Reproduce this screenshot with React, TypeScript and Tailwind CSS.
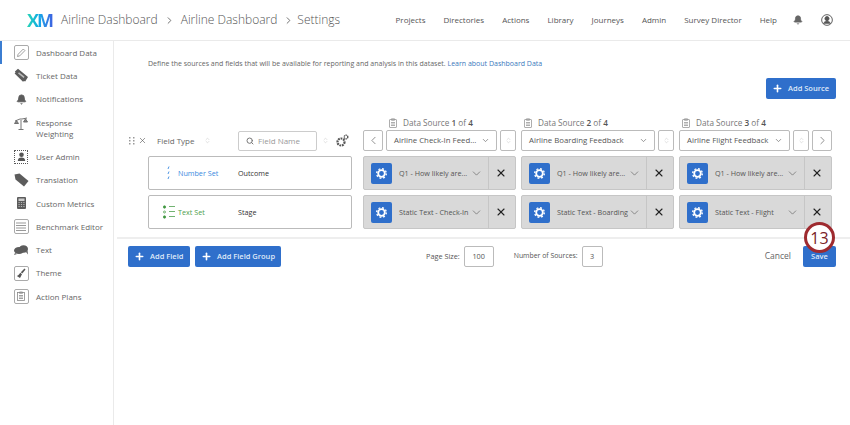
import { Bell, ChevronDown, ChevronLeft, ChevronRight, ChevronsUpDown, Plus, Search, X } from 'lucide-react'
import type { ReactNode } from 'react'

const font = { fontFamily: '"Open Sans", sans-serif' }

function Box({ children }: { children: ReactNode }) {
  return (
    <div className="w-[15px] h-[15px] border border-[#aaa] rounded-[2px] flex items-center justify-center">
      {children}
    </div>
  )
}

function Lines() {
  return (
    <svg width="10" height="9" viewBox="0 0 10 9" stroke="#999" strokeWidth="1">
      <path d="M0 1h10M0 3.5h10M0 6h10M0 8.5h10" />
    </svg>
  )
}

const sideItems: { label: ReactNode; icon: ReactNode; tall?: boolean; active?: boolean }[] = [
  {
    label: 'Dashboard Data',
    active: true,
    icon: (
      <Box>
        <svg width="10" height="10" viewBox="0 0 10 10" fill="none" stroke="#888" strokeWidth="0.8">
          <path d="M1.5 8.5l.6-2.2L7.3 1l1.6 1.6-5.2 5.3z" />
        </svg>
      </Box>
    ),
  },
  {
    label: 'Ticket Data',
    icon: (
      <svg width="15" height="15" viewBox="0 0 15 15" fill="#5c5c5c">
        <path d="M4 .8l10 8.2-2.800 4.600-1.200-.7-1 .9L.6 5.600l.9-1-.6-1z" />
        <path d="M5 4.200l5.600 4.600-1 1.200L4 5.400z" fill="#bbb" />
      </svg>
    ),
  },
  { label: 'Notifications', icon: <Bell size={11} fill="#5c5c5c" stroke="#5c5c5c" /> },
  {
    label: (
      <>
        Response
        <br />
        Weighting
      </>
    ),
    tall: true,
    icon: (
      <svg width="14" height="14" viewBox="0 0 14 14" fill="none" stroke="#666" strokeWidth="0.9" className="mb-[8px]">
        <path d="M7 1v11M4.500 12.500h5M1 4l5-2M8 2l5-1" />
        <path d="M.5 6.500L2.500 3.600l2 2.900z" fill="#888" />
        <path d="M9.500 5L11.500 1.800 13.500 5z" fill="#888" />
      </svg>
    ),
  },
  {
    label: 'User Admin',
    icon: (
      <div className="w-[14px] h-[14px] border border-dotted border-[#555] rounded-[1px] flex items-center justify-center">
        <svg width="9" height="9" viewBox="0 0 9 9" fill="#555">
          <circle cx="4.500" cy="2.800" r="2.300" />
          <path d="M.8 9c0-2.600 1.500-3.600 3.700-3.600S8.200 6.400 8.200 9z" />
        </svg>
      </div>
    ),
  },
  {
    label: 'Translation',
    icon: (
      <svg width="15" height="14" viewBox="0 0 15 14" fill="#5c5c5c">
        <path d="M.5 1.500L5.500.5l9 7.500-4.500 5.500L1.500 6.500z" />
      </svg>
    ),
  },
  {
    label: 'Custom Metrics',
    icon: (
      <svg width="9" height="12" viewBox="0 0 9 12">
        <rect width="9" height="12" rx="1" fill="#5c5c5c" />
        <rect x="1.500" y="1.500" width="6" height="2.500" fill="#ccc" />
        <path d="M1.500 5.500h6M1.500 7.500h6M1.500 9.500h6" stroke="#ccc" strokeWidth="0.8" strokeDasharray="1.200 1.200" />
      </svg>
    ),
  },
  { label: 'Benchmark Editor', icon: <Box><Lines /></Box> },
  {
    label: 'Text',
    icon: (
      <svg width="14" height="10" viewBox="0 0 14 10" fill="#5c5c5c">
        <ellipse cx="5" cy="5.500" rx="5" ry="3.500" />
        <ellipse cx="9.500" cy="4" rx="4.500" ry="3.800" />
        <path d="M1 8l-1 2 3-1zM12 7l2 2.500-.5-4z" />
      </svg>
    ),
  },
  {
    label: 'Theme',
    icon: (
      <Box>
        <svg width="10" height="11" viewBox="0 0 10 11" fill="#555">
          <path d="M8.500.5l1 1-3.200 4-1.500-1.300z" />
          <path d="M4.300 4.700l1.700 1.500-2 3.800L.8 8c1.500-.4 2.500-1.800 3.500-3.300z" />
        </svg>
      </Box>
    ),
  },
  {
    label: 'Action Plans',
    icon: (
      <Box>
        <svg width="8" height="10" viewBox="0 0 8 10" fill="none" stroke="#888" strokeWidth="0.8">
          <rect x="0.500" y="1.500" width="7" height="8" />
          <path d="M2.500 1h3v1.300h-3zM2 4.500h4M2 6h4M2 7.500h4" />
        </svg>
      </Box>
    ),
  },
]

const navItems = ['Projects', 'Directories', 'Actions', 'Library', 'Journeys', 'Admin', 'Survey Director', 'Help']

function Clipboard() {
  return (
    <svg width="8" height="10" viewBox="0 0 8 10" fill="none" stroke="#999" strokeWidth="0.8">
      <rect x="0.500" y="1.500" width="7" height="8" rx="0.500" />
      <path d="M2.500 .8h3v1.500h-3zM2 4.500h4M2 6h4M2 7.500h4" />
    </svg>
  )
}

function Gear() {
  return (
    <svg width="13" height="13" viewBox="0 0 13 13" fill="none" stroke="#fff">
      <circle cx="6.500" cy="6.500" r="3.300" strokeWidth="1.800" />
      <circle cx="6.500" cy="6.500" r="4.800" strokeWidth="1.400" strokeDasharray="1.900 1.870" />
    </svg>
  )
}

function SortBtn() {
  return (
    <div className="w-[16px] h-[21px] border border-[#bbb] rounded-[2px] flex items-center justify-center shrink-0">
      <ChevronsUpDown size={7} stroke="#ccc" />
    </div>
  )
}

function ArrowBtn({ dir }: { dir: 'left' | 'right' }) {
  return (
    <div className="w-[20px] h-[21px] border border-[#bbb] rounded-[2px] flex items-center justify-center shrink-0">
      {dir === 'left' ? <ChevronLeft size={13} stroke="#777" strokeWidth={1.5} /> : <ChevronRight size={13} stroke="#777" strokeWidth={1.5} />}
    </div>
  )
}

function SourceHead({ n, name, prev, next, labelPad }: { n: number; name: string; prev?: boolean; next?: boolean; labelPad: string }) {
  return (
    <div className="w-[153px] flex flex-col">
      <div className={`h-[12px] flex items-center gap-[6px] text-[8.200px] text-[#777] ${labelPad}`}>
        <Clipboard />
        <span>
          Data Source <b className="font-semibold text-[#555]">{n}</b> of <b className="font-semibold text-[#555]">4</b>
        </span>
      </div>
      <div className="flex gap-[3px] mt-[1px]">
        {prev && <ArrowBtn dir="left" />}
        <div className="flex-1 min-w-0 h-[21px] border border-[#bbb] rounded-[2px] flex items-center justify-between pl-[7px] pr-[6px] text-[7.800px] text-[#555]">
          <span className="whitespace-nowrap">{name}</span>
          <ChevronDown size={9} stroke="#777" />
        </div>
        <SortBtn />
        {next && <ArrowBtn dir="right" />}
      </div>
    </div>
  )
}

function FieldCell({ text }: { text: string }) {
  return (
    <div className="w-[153px] h-[34px] bg-[#d9d9d9] border border-[#c6c6c6] rounded-[2px] flex items-center">
      <div className="w-[21px] h-[21px] ml-[7px] bg-[#2f6fcb] rounded-[2px] flex items-center justify-center shrink-0">
        <Gear />
      </div>
      <span className="ml-[7px] w-[70px] shrink-0 text-[7.200px] text-[#555] whitespace-nowrap">{text}</span>
      <ChevronDown size={13} stroke="#666" strokeWidth={1.3} className="ml-[1px] shrink-0" />
      <div className="ml-[5px] self-stretch w-[1px] bg-[#c6c6c6]" />
      <X size={12} stroke="#222" strokeWidth={2.2} className="ml-[6px] shrink-0" />
    </div>
  )
}

function FieldRow({ icon, type, color, name, cells }: { icon: ReactNode; type: string; color: string; name: string; cells: string[] }) {
  return (
    <div className="flex">
      <div className="ml-[34px] w-[204px] h-[34px] border border-[#bbb] rounded-[2px] flex items-center text-[7.200px]">
        <div className="w-[29px] flex justify-end pr-[3px]">{icon}</div>
        <span className={`w-[60px] ${color}`}>{type}</span>
        <span className="text-[#333]">{name}</span>
      </div>
      <div className="ml-[11px] flex gap-[5px]">
        {cells.map((c, i) => (
          <FieldCell key={i} text={c} />
        ))}
      </div>
    </div>
  )
}

function BlueBtn({ label, className }: { label: string; className: string }) {
  return (
    <div className={`h-[21px] bg-[#2f6fcb] rounded-[2px] flex items-center pl-[6px] gap-[5px] text-[7.500px] font-semibold text-[#dfe9f8] ${className}`}>
      <Plus size={11} stroke="#fff" strokeWidth={3.5} />
      {label}
    </div>
  )
}

export default function App() {
  return (
    <div style={font} className="w-[850px] h-[425px] bg-white flex flex-col overflow-hidden relative">
      {/* Top bar */}
      <header className="h-[41px] shrink-0 border-b border-[#eaeaea] flex items-center pl-[27px] pr-[17px]">
        <span className="w-[26px] text-[18px] font-bold tracking-[-2px] bg-linear-to-r from-[#2ad4b4] via-[#14a5e8] to-[#3d5fe0] bg-clip-text text-transparent">
          XM
        </span>
        <div className="ml-[8px] flex items-center text-[12px] font-light text-[#555] whitespace-nowrap">
          <span>Airline Dashboard</span>
          <ChevronRight size={11} stroke="#666" className="mx-[6px]" />
          <span>Airline Dashboard</span>
          <ChevronRight size={11} stroke="#666" className="ml-[6px] mr-[3px]" />
          <span>Settings</span>
        </div>
        <nav className="ml-auto flex items-center gap-[18px] text-[8px] text-[#555]">
          {navItems.map(n => (
            <span key={n}>{n}</span>
          ))}
          <Bell size={10} fill="#666" stroke="#666" className="ml-[-2px]" />
          <svg width="12" height="12" viewBox="0 0 13 13" fill="none" stroke="#555">
            <circle cx="6.500" cy="6.500" r="5.800" />
            <circle cx="6.500" cy="5" r="2.200" fill="#555" />
            <path d="M2.500 10.500c.8-1.800 2.200-2.500 4-2.500s3.200.7 4 2.500" fill="#555" />
          </svg>
        </nav>
      </header>

      <div className="flex flex-1 min-h-0">
        {/* Sidebar */}
        <aside className="w-[114px] shrink-0 border-r border-[#eaeaea]">
          {sideItems.map((it, i) => (
            <div
              key={i}
              className={`flex items-center text-[8px] leading-[11.500px] text-[#666] border-l-2 ${it.active ? 'border-[#3b7dd1]' : 'border-transparent'} ${it.tall ? 'h-[34.500px]' : 'h-[23.250px]'}`}
            >
              <div className="w-[34px] flex justify-center pl-[8px] pr-[4px] shrink-0">{it.icon}</div>
              <span>{it.label}</span>
            </div>
          ))}
        </aside>

        {/* Main */}
        <main className="flex-1 min-w-0 flex flex-col">
          <p className="mt-[17px] ml-[34px] text-[7px] leading-[11px] text-[#666] whitespace-nowrap">
            Define the sources and fields that will be available for reporting and analysis in this dataset.{' '}
            <span className="text-[#3b78bd]">Learn about Dashboard Data</span>
          </p>
          <div className="mt-[9px] pr-[14px] flex justify-end">
            <BlueBtn label="Add Source" className="w-[70px]" />
          </div>

          <div className="mt-[18px] flex items-end">
            <div className="w-[238px] h-[21px] flex items-center text-[8px] text-[#666]">
              <svg width="6" height="8" viewBox="0 0 6 8" fill="#999" className="ml-[15px]">
                <path d="M0 0h1.500v1.500H0zM4 0h1.500v1.500H4zM0 3h1.500v1.500H0zM4 3h1.500v1.500H4zM0 6h1.500v1.500H0zM4 6h1.500v1.500H4z" />
              </svg>
              <X size={9} stroke="#555" strokeWidth={1.6} className="ml-[3px]" />
              <span className="ml-[10px] w-[47px]">Field Type</span>
              <ChevronsUpDown size={7} stroke="#ccc" />
              <div className="ml-[27px] w-[79px] h-[20px] shrink-0 border border-[#ccc] rounded-[2px] flex items-center pl-[7px] gap-[4px] text-[#999]">
                <Search size={8} stroke="#777" strokeWidth={3} />
                Field Name
              </div>
              <ChevronsUpDown size={7} stroke="#ccc" className="ml-[5px] shrink-0" />
              <svg width="13" height="13" viewBox="0 0 13 13" fill="#555" className="ml-[7px] shrink-0">
                <circle cx="5" cy="8" r="3.500" fill="none" stroke="#555" strokeWidth="2.200" strokeDasharray="1.800 .8" />
                <circle cx="10" cy="3" r="1.800" fill="none" stroke="#555" strokeWidth="1.400" strokeDasharray="1.200 .6" />
              </svg>
            </div>
            <div className="ml-[11px] flex gap-[5px]">
              <SourceHead n={1} name="Airline Check-In Feed..." prev labelPad="pl-[26px]" />
              <SourceHead n={2} name="Airline Boarding Feedback" labelPad="pl-[3px]" />
              <SourceHead n={3} name="Airline Flight Feedback" next labelPad="pl-[3px]" />
            </div>
          </div>

          <div className="mt-[5px] flex flex-col gap-[5px]">
            <FieldRow
              icon={
                <svg width="3" height="14" viewBox="0 0 3 14" stroke="#3b8ae0" strokeWidth="0.900" className="mr-[5px]">
                  <path d="M2 .5L1 3M2 5.500L1 8M2 10.500L1 13" />
                </svg>
              }
              type="Number Set"
              color="text-[#3b8ae0]"
              name="Outcome"
              cells={['Q1 - How likely are...', 'Q1 - How likely are...', 'Q1 - How likely are...']}
            />
            <FieldRow
              icon={
                <svg width="12" height="14" viewBox="0 0 12 14" stroke="#4ea04e" strokeWidth="0.800" fill="#3e933e">
                  <circle cx="1.500" cy="2" r="1.200" />
                  <circle cx="1.500" cy="7" r="1" fill="none" />
                  <circle cx="1.500" cy="12" r="1.200" />
                  <path d="M6 1.500h6M6 6.500h6M6 11.500h6" />
                </svg>
              }
              type="Text Set"
              color="text-[#4ea04e]"
              name="Stage"
              cells={['Static Text - Check-In', 'Static Text - Boarding', 'Static Text - Flight']}
            />
          </div>

          <div className="mt-[8px] ml-[3px] h-[2px] bg-[#eee]" />

          <div className="mt-[7px] pl-[14px] pr-[14px] flex items-center text-[7.300px] text-[#555]">
            <BlueBtn label="Add Field" className="w-[62px]" />
            <BlueBtn label="Add Field Group" className="ml-[5px] w-[86px]" />
            <span className="ml-[145px]">Page Size:</span>
            <div className="ml-[4px] w-[30px] h-[21px] border border-[#bbb] rounded-[2px] flex items-center justify-center">100</div>
            <span className="ml-[20px] text-[6.900px]">Number of Sources:</span>
            <div className="ml-[4px] w-[21px] h-[21px] border border-[#bbb] rounded-[2px] flex items-center justify-center">3</div>
            <span className="ml-auto text-[8.500px] text-[#666]">Cancel</span>
            <div className="ml-[12px] w-[33px] h-[21px] bg-[#2f6fcb] rounded-[2px] flex items-center justify-center text-[7.500px] font-semibold text-[#dfe9f8]">Save</div>
          </div>
        </main>
      </div>

      {/* Step badge */}
      <div className="absolute left-[804px] top-[222px] w-[31px] h-[31px] rounded-full bg-white border-[3px] border-[#9e2a2f] flex items-center justify-center text-[16px] text-[#7a2226]">
        13
      </div>
    </div>
  )
}
